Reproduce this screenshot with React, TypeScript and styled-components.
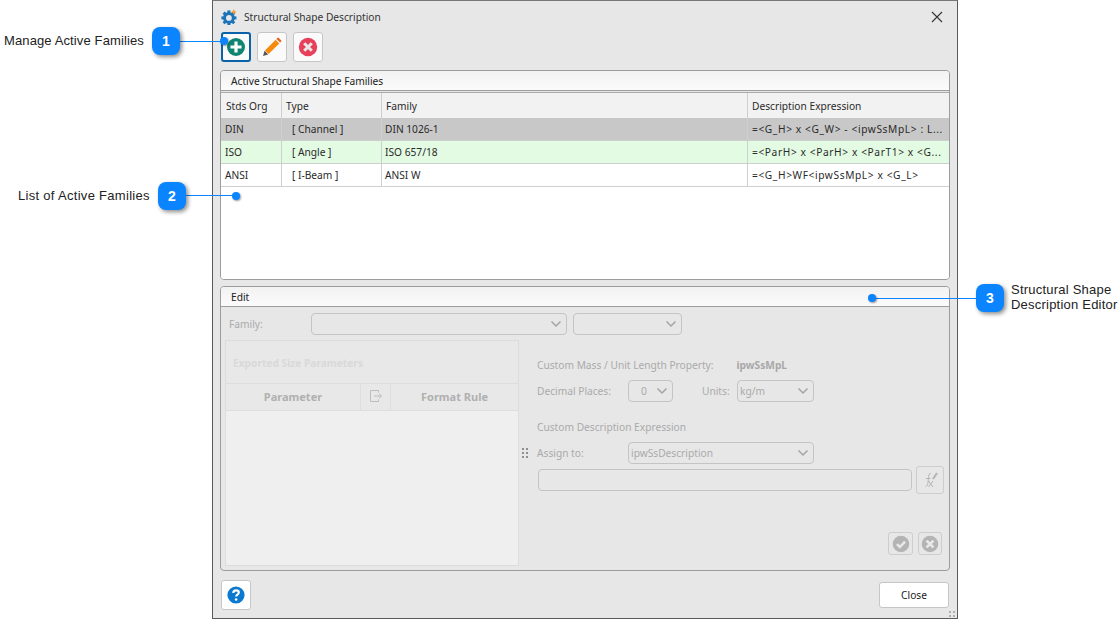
import React from "react";
import styled, { createGlobalStyle } from "styled-components";

const Global = createGlobalStyle`
  html, body { margin: 0; padding: 0; background: #fff; width: 1119px; height: 619px; overflow: hidden; }
  #root { width: 1119px; height: 619px; }
  * { box-sizing: border-box; }
`;
const FONT = `"Noto Sans", "DejaVu Sans", sans-serif`;

const Page = styled.div`
  position: relative; width: 1119px; height: 619px; padding-left: 212px;
  font-family: ${FONT}; font-size: 10.2px; color: #222; background: #fff;
`;
const Dialog = styled.div`
  position: relative; width: 746px; height: 619px; background: #e7e7e7;
  border: 1px solid #5a5a5a; border-top-color: #777; padding: 0 7px 0 7px;
  display: flex; flex-direction: column;
`;
const TitleBar = styled.div`
  height: 31px; display: flex; align-items: center; gap: 7px; padding-left: 1px; color: #333;
`;
const TitleText = styled.span`flex: 1;`;
const CloseX = styled.button`
  width: 16px; height: 16px; border: 0; background: none; padding: 0; margin-right: 5px; display: flex;
`;
const Toolbar = styled.div`
  height: 38px; display: flex; gap: 6px; align-items: flex-start; padding-left: 1px;
`;
const ToolBtn = styled.button<{ $focus?: boolean }>`
  width: 30px; height: 30px; padding: 0; border-radius: 3px; background: #fafafa;
  border: ${p => (p.$focus ? "2px solid #0a62a8" : "1px solid #c6c6c6")};
  display: flex; align-items: center; justify-content: center;
`;
const Section = styled.div<{ $h: number; $mb: number }>`
  height: ${p => p.$h}px; margin-bottom: ${p => p.$mb}px; border: 1px solid #9c9c9c; border-radius: 4px;
  display: flex; flex-direction: column; overflow: hidden; background: #e7e7e7;
`;
const SectionHead = styled.div<{ $h: number }>`
  height: ${p => p.$h}px; flex: none; background: linear-gradient(#f2f2f2, #fbfbfb); padding-left: 10px;
  display: flex; align-items: center; border-bottom: 1px solid #9c9c9c; color: #222;
`;
const TableWrap = styled.div`
  flex: 1; background: #fff; margin-top: 1px;
  border-top: 1px solid #aaa; display: flex; flex-direction: column;
`;
const Row = styled.div<{ $bg: string }>`
  display: grid; grid-template-columns: 61px 100px 366px 1fr; height: 23px; background: ${p => p.$bg};
  border-bottom: 1px solid #cfcfcf;
`;
const HeadRow = styled(Row)`
  height: 25px; border-bottom: 0;
`;
const Cell = styled.div<{ $indent?: number; $sep?: boolean }>`
  display: flex; align-items: center; padding-left: ${p => p.$indent ?? 4}px; white-space: nowrap; overflow: hidden;
  border-right: ${p => (p.$sep === false ? "0" : "1px solid #cfcfcf")}; color: #2a2a2a;
`;
const ExprCell = styled(Cell)`
  letter-spacing: .6px;
`;
const EditBody = styled.div`
  flex: 1; padding: 6px 4px 4px 4px; display: flex; flex-direction: column; gap: 5px;
`;
const FamilyRow = styled.div`
  height: 22px; display: flex; align-items: center; color: #aaa;
`;
const FamilyLabel = styled.span`width: 86px; padding-left: 4px;`;
const Select = styled.div<{ $w: number; $ml?: number }>`
  width: ${p => p.$w}px; margin-left: ${p => p.$ml ?? 0}px; height: 22px; border: 1px solid #c4c4c4; border-radius: 4px;
  display: flex; align-items: center; justify-content: space-between; padding: 0 4px 0 2px; color: #aaa; flex: none;
`;
const SelectValue = styled.span<{ $pl?: number }>`padding-left: ${p => p.$pl ?? 0}px;`;
const Split = styled.div`flex: 1; display: flex; min-height: 0;`;
const ParamPanel = styled.div`
  width: 294px; border: 1px solid #dcdcdc; display: flex; flex-direction: column; background: #efefef;
`;
const ParamTitle = styled.div`
  height: 43px; flex: none; background: #e8e8e8; color: #d9d9d9; font-weight: 700; padding-left: 7px; display: flex; align-items: center; padding-top: 1px;
  border-bottom: 1px solid #dedede;
`;
const ParamHead = styled.div`
  height: 27px; flex: none; background: #e8e8e8; border-bottom: 1px solid #dedede; color: #b0b0b0; font-weight: 700; font-size: 11px;
  display: grid; grid-template-columns: 135px 30px 1fr;
`;
const ParamCol = styled.div<{ $sep?: boolean }>`
  display: flex; align-items: center; justify-content: center; padding-bottom: 2px; border-right: ${p => (p.$sep ? "1px solid #dedede" : "0")};
`;
const Grip = styled.div`
  width: 18px; flex: none; display: flex; align-items: center; justify-content: center; padding-right: 6px;
`;
const Right = styled.div`
  flex: 1; display: flex; flex-direction: column; color: #aaa; padding-right: 1px; min-width: 0;
`;
const PropRow = styled.div`
  height: 22px; margin-top: 14px; display: flex; align-items: center;
`;
const PropName = styled.span`margin-left: 23px; font-weight: 700; color: #a8a8a8;`;
const FieldRow = styled.div<{ $mt: number }>`
  height: 22px; margin-top: ${p => p.$mt}px; display: flex; align-items: center;
`;
const FieldLabel = styled.span`width: 91px;`;
const UnitsLabel = styled.span`margin-left: 29px; width: 35px;`;
const SectionLabel = styled.div`height: 16px; margin-top: 17px; display: flex; align-items: center;`;
const ExprRow = styled.div`display: flex; align-items: center; gap: 4px; margin-top: 2px; height: 28px;`;
const ExprInput = styled.div`
  width: 374px; height: 22px; border: 1px solid #c4c4c4; border-radius: 4px; margin-left: 1px; flex: none;
`;
const MiniBtn = styled.button<{ $w: number; $h: number }>`
  width: ${p => p.$w}px; height: ${p => p.$h}px; padding: 0; background: #e7e7e7; border: 1px solid #cdcdcd; border-radius: 3px;
  display: flex; align-items: center; justify-content: center; flex: none;
`;
const ActionRow = styled.div`
  margin-top: 38px; display: flex; justify-content: flex-end; gap: 5px; padding-right: 2px;
`;
const Footer = styled.div`
  margin-top: 9px; height: 30px; display: flex; align-items: center; justify-content: space-between;
  padding-left: 1px; padding-right: 1px;
`;
const HelpBtn = styled(ToolBtn)`background: #fff;`;
const CloseBtn = styled.button`
  width: 70px; height: 26px; background: #fff; border: 1px solid #c6c6c6; border-radius: 3px;
  font: inherit; color: #222; padding: 0;
`;
const Resize = styled.div`position: absolute; right: 2px; bottom: 1px; line-height: 0;`;

/* callouts lie over the page */
const Badge = styled.div<{ $x: number; $y: number }>`
  position: absolute; left: ${p => p.$x}px; top: ${p => p.$y}px; width: 28px; height: 28px; border-radius: 8px;
  background: #0a84ff; color: #fff; font: 700 14px "Liberation Sans", sans-serif;
  display: flex; align-items: center; justify-content: center; box-shadow: 2px 2px 4px rgba(0,0,0,.45); z-index: 3;
`;
const Leader = styled.div<{ $x: number; $y: number; $w: number }>`
  position: absolute; left: ${p => p.$x}px; top: ${p => p.$y}px; width: ${p => p.$w}px; height: 1px; background: #0a84ff; z-index: 2;
`;
const Dot = styled.div<{ $x: number; $y: number }>`
  position: absolute; left: ${p => p.$x}px; top: ${p => p.$y}px; width: 8px; height: 8px; border-radius: 50%;
  background: #0a84ff; box-shadow: 1px 1px 2px rgba(0,0,0,.4); z-index: 2;
`;
const Note = styled.div<{ $x: number; $y: number; $ls?: number }>`
  position: absolute; left: ${p => p.$x}px; top: ${p => p.$y}px; font: 13px/15px "Liberation Sans", sans-serif; color: #222; white-space: nowrap;
  letter-spacing: ${p => p.$ls ?? 0.17}px;
`;

const Chevron = () => (
  <svg width="12" height="8" viewBox="0 0 12 8"><path d="M1.5 1.5 6 6l4.5-4.5" fill="none" stroke="#a4a4a4" strokeWidth="1.5" /></svg>
);

const Gear = () => (
  <svg width="16" height="16" viewBox="0 0 16 16">
    <g fill="#1b74b8">
      {[0, 45, 90, 135, 180, 225, 270, 315].map(a => (
        <rect key={a} x="6.400" y="1.400" width="3" height="4" transform={`rotate(${a} 7.900 8.900)`} />
      ))}
    </g>
    <circle cx="7.900" cy="8.900" r="4.400" fill="none" stroke="#1b74b8" strokeWidth="3" />
    <path d="M12.800 0l.9 2.200 2.300.8-2.300.8-.9 2.200-.9-2.200-2.300-.8 2.300-.8z" fill="#f59a23" />
  </svg>
);

const Plus = () => (
  <svg width="20" height="20" viewBox="0 0 20 20">
    <circle cx="10" cy="10" r="9" fill="#0e8572" />
    <path d="M10 4.500v11M4.500 10h11" stroke="#fff" strokeWidth="3.200" />
  </svg>
);
const Pencil = () => (
  <svg width="20" height="20" viewBox="0 0 20 20">
    <path d="M1 19l1.600-5.200 3.600 3.600z" fill="#555" />
    <path d="M2.900 13.400 13.600 2.700l3.700 3.700L6.600 17.100z" fill="#f58a0b" />
    <path d="M14.400 1.900l1-1a1 1 0 0 1 1.400 0l2.300 2.300a1 1 0 0 1 0 1.400l-1 1z" fill="#e8641b" />
  </svg>
);
const XCircle = ({ c, size = 20 }: { c: string; size?: number }) => (
  <svg width={size} height={size} viewBox="0 0 20 20">
    <circle cx="10" cy="10" r="9.200" fill={c} />
    <path d="M6.200 6.200l7.600 7.600M13.800 6.200l-7.600 7.600" stroke="#e9e9e9" strokeWidth="3" />
  </svg>
);
const CheckCircle = () => (
  <svg width="18" height="18" viewBox="0 0 20 20">
    <circle cx="10" cy="10" r="9.200" fill="#b4b4b4" />
    <path d="M5.500 10.200l3.200 3.200 5.800-6" fill="none" stroke="#e9e9e9" strokeWidth="2.800" />
  </svg>
);
const Help = () => (
  <svg width="18" height="18" viewBox="0 0 18 18">
    <circle cx="9" cy="9" r="8.600" fill="#0b79d0" />
    <path d="M6.300 7c0-1.700 1.200-2.600 2.800-2.600s2.700.9 2.700 2.200c0 2-2.600 2-2.600 3.800" fill="none" stroke="#fff" strokeWidth="2.200" />
    <circle cx="9.100" cy="13.500" r="1.300" fill="#fff" />
  </svg>
);
const Fx = () => (
  <svg width="20" height="20" viewBox="0 0 20 20" fill="none" stroke="#b4b4b4">
    <path d="M11 3.500C9 3 8.800 5 8.400 8.500 8 12 8 16 5.500 16.500" strokeWidth="1" />
    <path d="M6 8.500h4.500M8.500 11l4.500 6M13 11l-4.500 6" strokeWidth="1" />
    <path d="M13 9l4-6" strokeWidth="2.200" />
  </svg>
);
const ExportIcon = () => (
  <svg width="14" height="14" viewBox="0 0 14 14" fill="none" stroke="#bdbdbd">
    <path d="M9.500 3.500v-2h-8v11h8v-2" />
    <path d="M5 7h7.500M10 4.800 12.500 7 10 9.200" />
  </svg>
);
const Dots = ({ c, n, s }: { c: string; n: number; s: number }) => (
  <svg width={s * 2 - 2} height={s * n - 2} viewBox={`0 0 ${s * 2 - 2} ${s * n - 2}`}>
    {Array.from({ length: n * 2 }).map((_, i) => (
      <rect key={i} x={(i % 2) * s} y={Math.floor(i / 2) * s} width="2" height="2" fill={c} />
    ))}
  </svg>
);

const rows = [
  { bg: "#c8c8c8", org: "DIN", type: "[ Channel ]", fam: "DIN 1026-1", expr: "=<G_H> x <G_W> - <ipwSsMpL> : L..." },
  { bg: "#e3fbe3", org: "ISO", type: "[ Angle ]", fam: "ISO 657/18", expr: "=<ParH> x <ParH> x <ParT1> x <G..." },
  { bg: "#ffffff", org: "ANSI", type: "[ I-Beam ]", fam: "ANSI W", expr: "=<G_H>WF<ipwSsMpL> x <G_L>" },
];

export default function App() {
  return (
    <Page>
      <Global />
      <Dialog>
        <TitleBar>
          <Gear />
          <TitleText>Structural Shape Description</TitleText>
          <CloseX aria-label="Close">
            <svg width="16" height="16" viewBox="0 0 16 16"><path d="M3 3l10 10M13 3 3 13" stroke="#333" strokeWidth="1.100" /></svg>
          </CloseX>
        </TitleBar>
        <Toolbar>
          <ToolBtn $focus><Plus /></ToolBtn>
          <ToolBtn><Pencil /></ToolBtn>
          <ToolBtn><XCircle c="#e8405a" /></ToolBtn>
        </Toolbar>
        <Section $h={210} $mb={6}>
          <SectionHead $h={20}>Active Structural Shape Families</SectionHead>
          <TableWrap>
            <HeadRow $bg="#f2f2f2">
              <Cell $indent={5}>Stds Org</Cell>
              <Cell $indent={4}>Type</Cell>
              <Cell $indent={4}>Family</Cell>
              <Cell $indent={4} $sep={false}>Description Expression</Cell>
            </HeadRow>
            {rows.map(r => (
              <Row key={r.org} $bg={r.bg}>
                <Cell>{r.org}</Cell>
                <Cell $indent={10}>{r.type}</Cell>
                <Cell $indent={3}>{r.fam}</Cell>
                <ExprCell $sep={false}>{r.expr}</ExprCell>
              </Row>
            ))}
          </TableWrap>
        </Section>
        <Section $h={285} $mb={0}>
          <SectionHead $h={20}>Edit</SectionHead>
          <EditBody>
            <FamilyRow>
              <FamilyLabel>Family:</FamilyLabel>
              <Select $w={256}><span /><Chevron /></Select>
              <Select $w={109} $ml={6}><span /><Chevron /></Select>
            </FamilyRow>
            <Split>
              <ParamPanel>
                <ParamTitle>Exported Size Parameters</ParamTitle>
                <ParamHead>
                  <ParamCol $sep>Parameter</ParamCol>
                  <ParamCol $sep><ExportIcon /></ParamCol>
                  <ParamCol>Format Rule</ParamCol>
                </ParamHead>
              </ParamPanel>
              <Grip><Dots c="#8f8f8f" n={3} s={4} /></Grip>
              <Right>
                <PropRow>Custom Mass / Unit Length Property:<PropName>ipwSsMpL</PropName></PropRow>
                <FieldRow $mt={4}>
                  <FieldLabel>Decimal Places:</FieldLabel>
                  <Select $w={45}><SelectValue $pl={10}>0</SelectValue><Chevron /></Select>
                  <UnitsLabel>Units:</UnitsLabel>
                  <Select $w={77}><SelectValue>kg/m</SelectValue><Chevron /></Select>
                </FieldRow>
                <SectionLabel>Custom Description Expression</SectionLabel>
                <FieldRow $mt={7}>
                  <FieldLabel>Assign to:</FieldLabel>
                  <Select $w={186}><SelectValue>ipwSsDescription</SelectValue><Chevron /></Select>
                </FieldRow>
                <ExprRow>
                  <ExprInput />
                  <MiniBtn $w={28} $h={28}><Fx /></MiniBtn>
                </ExprRow>
                <ActionRow>
                  <MiniBtn $w={25} $h={23}><CheckCircle /></MiniBtn>
                  <MiniBtn $w={24} $h={23}><XCircle c="#b4b4b4" size={18} /></MiniBtn>
                </ActionRow>
              </Right>
            </Split>
          </EditBody>
        </Section>
        <Footer>
          <HelpBtn><Help /></HelpBtn>
          <CloseBtn>Close</CloseBtn>
        </Footer>
        <Resize><Dots c="#b0b0b0" n={2} s={4} /></Resize>
      </Dialog>

      <Note $x={4} $y={33} $ls={0.12}>Manage Active Families</Note>
      <Leader $x={180} $y={41} $w={45} />
      <Badge $x={152} $y={27}>1</Badge>
      <Dot $x={220} $y={37} />

      <Note $x={18} $y={188} $ls={0.3}>List of Active Families</Note>
      <Leader $x={186} $y={195} $w={50} />
      <Badge $x={158} $y={182}>2</Badge>
      <Dot $x={232} $y={192} />

      <Leader $x={872} $y={298} $w={104} />
      <Dot $x={868} $y={294} />
      <Badge $x={976} $y={284}>3</Badge>
      <Note $x={1011} $y={282} $ls={0.22}>Structural Shape<br />Description Editor</Note>
    </Page>
  );
}
